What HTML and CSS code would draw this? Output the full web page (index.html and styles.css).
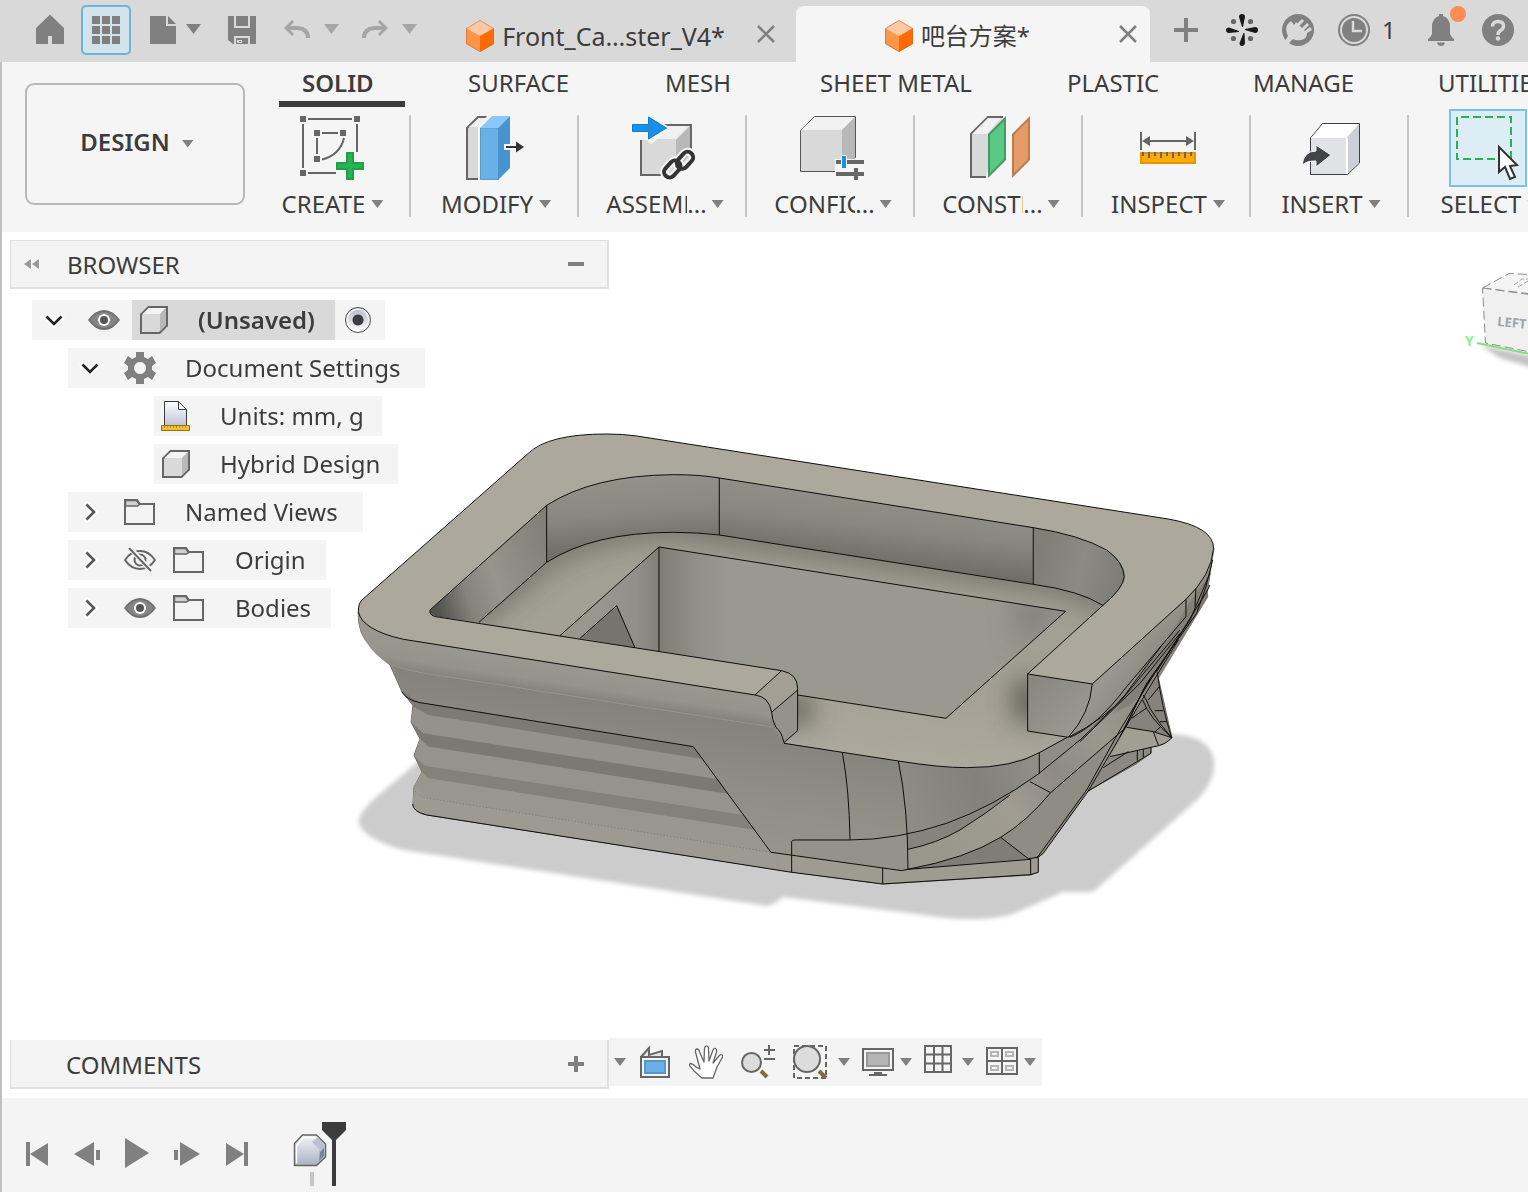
FILE: index.html
```html
<!DOCTYPE html>
<html lang="en">
<head>
<meta charset="utf-8">
<title>吧台方案*</title>
<link rel="stylesheet" href="styles.css">
</head>
<body>
<header class="topbar">
  <div class="quick">
    <button class="tool" aria-label="Home"><svg width="28" height="32" viewBox="36 14 28 32"><path fill="#808080" d="M50 14.500l14 13.500v16H52v-8h-4v8H36V28z"/></svg></button>
    <button class="tool tool-on" aria-label="Data panel"><svg width="28" height="28" viewBox="0 0 28 28"><path fill="#808080" d="M0 0h8v8H0zM10 0h8v8h-8zM20 0h8v8h-8zM0 10h8v8H0zM10 10h8v8h-8zM20 10h8v8h-8zM0 20h8v8H0zM10 20h8v8h-8zM20 20h8v8h-8z"/></svg></button>
    <button class="tool tool-file" aria-label="File"><svg width="26" height="28" viewBox="0 0 26 28"><path fill="#808080" d="M0 0h16v10h10v18H0zM18 0l8 8h-8z"/></svg><i class="caret caret-lg"></i></button>
    <button class="tool tool-save" aria-label="Save"><svg width="28" height="28" viewBox="0 0 28 28"><path fill="#808080" d="M0 0h28v28H5l-5-4z"/><path fill="none" stroke="#d9d9d9" stroke-width="2" d="M7 0v11h14V0M7 28v-7h14v7"/><path fill="#d9d9d9" d="M6 22h2v6H6zM9 24h5v3H9z"/><path fill="#808080" d="M11 25h2v1h-2z"/></svg></button>
    <button class="tool tool-menu" aria-label="Undo"><svg width="26" height="20" viewBox="0 0 26 20"><path fill="none" stroke="#a6a6a6" stroke-width="4" d="M2 8h12q10 1 10 10"/><path fill="none" stroke="#a6a6a6" stroke-width="3" d="M9 1L2 8l7 7"/></svg><i class="caret caret-lg caret-dim"></i></button>
    <button class="tool tool-menu" aria-label="Redo"><svg width="26" height="20" viewBox="0 0 26 20"><path fill="none" stroke="#a6a6a6" stroke-width="4" d="M24 8H12Q2 9 2 18"/><path fill="none" stroke="#a6a6a6" stroke-width="3" d="M17 1l7 7-7 7"/></svg><i class="caret caret-lg caret-dim"></i></button>
  </div>
  <div class="docs">
    <div class="doc">
      <div class="doc-name"><svg width="28" height="32" viewBox="0 0 28 32"><use href="#cube-orange"/></svg><span>Front_Ca…ster_V4*</span></div>
      <button class="close" aria-label="Close Front_Ca…ster_V4"><svg width="18" height="18" viewBox="0 0 18 18"><path stroke="#808080" stroke-width="2.600" d="M1 1l16 16M17 1L1 17"/></svg></button>
    </div>
    <div class="doc doc-on" lang="zh">
      <div class="doc-name"><svg width="28" height="32" viewBox="0 0 28 32"><use href="#cube-orange"/></svg><span>吧台方案*</span></div>
      <button class="close" aria-label="Close 吧台方案"><svg width="18" height="18" viewBox="0 0 18 18"><path stroke="#808080" stroke-width="2.600" d="M1 1l16 16M17 1L1 17"/></svg></button>
    </div>
  </div>
  <div class="status">
    <button aria-label="New design"><svg width="24" height="24" viewBox="0 0 24 24"><path stroke="#808080" stroke-width="4" d="M12 0v24M0 12h24"/></svg></button>
    <button aria-label="Assistant"><svg width="32" height="32" viewBox="0 0 32 32"><path fill="#1a1a1a" d="M13 3q0-3 3-3t3 3l-2 10h-1zM13.500 29q0 3 2.500 3t3-3l-.5-10h-1zM3 13.500q-3 0-3 2.500t3 3l10-1v-1zM29 13q3 0 3 3t-3 3l-10-3v-1z"/><g fill="#666"><circle cx="7.500" cy="7.500" r="2.600"/><circle cx="24.500" cy="7.500" r="2.600"/><circle cx="7.500" cy="24.500" r="2.600"/><circle cx="24.500" cy="24.500" r="2.600"/></g></svg></button>
    <button aria-label="Extensions"><svg width="32" height="32" viewBox="0 0 32 32"><circle cx="16" cy="16" r="16" fill="#808080"/><path fill="#d9d9d9" d="M5 11l4-4 3 4 2-3 6 6 5-5 2 2-5 5 1 1 5-4 2 3-5 3q0 6-6 7-5 1-8-1l-5 5-3-3 3-5q-3-6-1-11z"/><path stroke="#d9d9d9" stroke-width="3" d="M16 11l5-5"/></svg></button>
    <button class="jobs" aria-label="Job status"><svg width="32" height="32" viewBox="0 0 32 32"><circle cx="16" cy="16" r="15" fill="none" stroke="#808080" stroke-width="2"/><circle cx="16" cy="16" r="12" fill="#808080"/><path fill="none" stroke="#d9d9d9" stroke-width="2.400" d="M15 7v10h9"/></svg><span>1</span></button>
    <button class="bell" aria-label="Notifications"><svg width="26" height="32" viewBox="0 0 26 32"><path fill="#808080" d="M11 0h4v2q6 2 7 9v9q1 3 4 5v2H0v-2q3-2 4-5v-9q1-7 7-9zM9 28.500h8q-1 3.500-4 3.500t-4-3.500z"/></svg><i class="badge"></i></button>
    <button aria-label="Help"><svg width="32" height="32" viewBox="0 0 32 32"><circle cx="16" cy="16" r="16" fill="#808080"/><path fill="none" stroke="#d9d9d9" stroke-width="3.400" d="M10.500 12.500q0-5 5.500-5t5.500 4.500q0 3-3 4.500-2.500 1.500-2.500 4.500"/><circle cx="16" cy="24.500" r="2.200" fill="#d9d9d9"/></svg></button>
  </div>
</header>

<section class="ribbon">
  <button class="workspace">DESIGN <i class="caret"></i></button>
  <div class="ribbon-main">
    <nav class="tabs">
      <a href="#" class="tab-on">SOLID</a><a href="#">SURFACE</a><a href="#">MESH</a><a href="#">SHEET METAL</a><a href="#">PLASTIC</a><a href="#">MANAGE</a><a href="#">UTILITIES</a>
    </nav>
    <div class="groups">
      <button class="group group-first"><svg width="78" height="78" viewBox="292 109 78 78"><path fill="none" stroke="#666" stroke-width="2" d="M308 119h44M303 124v44M357 124v28M308 173h28M322 133h16M317 138v16M344 138q-4 17-22 21.500"/><path fill="#666" d="M300 116h6v6h-6zM354 116h6v6h-6zM300 170h6v6h-6zM314 130h6v6h-6zM340 130h6v6h-6zM314 156h6v6h-6z"/><path fill="#27b351" stroke="#219e48" stroke-width="2" d="M347 153h6v10h10v6h-10v10h-6v-10h-10v-6h10z"/></svg><span class="label">CREATE<i class="caret"></i></span></button>
      <button class="group"><svg width="78" height="78" viewBox="455 109 78 78"><path fill="#d9d9d9" stroke="#666" stroke-width="2" d="M478 179h-11v-51l11-11h12"/><path fill="#f0f0f0" d="M469 127l10-9h10l-9 9z"/><path fill="#f5f5f5" d="M478 128l9-12h4v64h-13z"/><path fill="#68b0e6" stroke="#5a9bcb" stroke-width="1" d="M480.500 128h18v51.500h-18z"/><path fill="#88c8fa" d="M480 128l12-12h18l-12 12z"/><path fill="#4794ce" d="M498 128l12-12v52l-12 12z"/><path fill="#f5f5f5" d="M504 144h12v6h-12z"/><path fill="#333" d="M506 146h10v-4.500l8 5.500-8 5.500V148h-10z"/></svg><span class="label">MODIFY<i class="caret"></i></span></button>
      <button class="group"><svg width="78" height="78" viewBox="623 109 78 78"><path fill="#d9d9d9" stroke="#666" stroke-width="2" d="M641 140l15-15h35v35l-16 15h-34z"/><path fill="#f0f0f0" d="M642 139l14-13h33l-13 13z"/><path fill="#b8b8b8" d="M676 140l14-14v28l-14 16z"/><path fill="#f5f5f5" d="M631 122h16v-8l24 14-20 16-4-4H631z"/><path fill="#1a8fe8" stroke="#0d7dd3" stroke-width="1" d="M632.500 124.500h16v-7.500l18 11-18 11v-7.500h-16z"/><g fill="none" stroke="#f5f5f5" stroke-width="8"><rect x="663" y="163" width="19" height="11" rx="5.500" transform="rotate(-48 673 169)"/><rect x="676" y="155" width="19" height="11" rx="5.500" transform="rotate(-48 685 161)"/></g><g fill="none" stroke="#333" stroke-width="4"><rect x="663" y="163" width="19" height="11" rx="5.500" transform="rotate(-48 673 169)"/><rect x="676" y="155" width="19" height="11" rx="5.500" transform="rotate(-48 685 161)"/></g></svg><span class="label"><span class="clip">ASSEMB</span>...<i class="caret"></i></span></button>
      <button class="group"><svg width="78" height="78" viewBox="791 109 78 78"><path fill="#d9d9d9" stroke="#555" stroke-width="1" d="M800.500 130.500l14-14h41v41l-14 14h-41z"/><path fill="#f2f2f2" d="M801 130l14-13h40l-13 13z"/><path fill="#b8b8b8" d="M842 130l13-13v43h-13z"/><path fill="#f5f5f5" d="M835 159h30v22h-30z"/><path fill="#666" d="M836 160h28v4h-28zM836 172h28v4h-28zM854 168h4v12h-4z"/><path fill="#1a8fe8" stroke="#f5f5f5" d="M841.500 155.500h5v13h-5z"/></svg><span class="label"><span class="clip">CONFIG</span>...<i class="caret"></i></span></button>
      <button class="group"><svg width="78" height="78" viewBox="959 109 78 78"><path fill="#d9d9d9" stroke="#666" stroke-width="2" d="M986 177h-15v-43l17-17h15"/><path fill="#f2f2f2" d="M972 134l16-16h13l-14 16z"/><path fill="#5ac882" stroke="#449a64" stroke-width="2" d="M989 134.500l16-16v41l-16 16z"/><path fill="#e69b66" stroke="#bd7c4f" stroke-width="2" d="M1013 134.500l16-16v41l-16 16z"/></svg><span class="label"><span class="clip">CONSTR</span>...<i class="caret"></i></span></button>
      <button class="group"><svg width="78" height="78" viewBox="1127 109 78 78"><path stroke="#666" stroke-width="2" d="M1141 132v18M1195 132v18M1146 141h44"/><path fill="#666" d="M1142 141l8-5v10zM1194 141l-8-5v10z"/><path fill="#ffaa0c" stroke="#e69500" stroke-width="2" d="M1141 153h54v10h-54z"/><path stroke="#666" stroke-width="2" d="M1143 152v4M1149 152v6M1155 152v4M1161 152v6M1167 152v4M1173 152v6M1179 152v4M1185 152v6M1191 152v4"/></svg><span class="label">INSPECT<i class="caret"></i></span></button>
      <button class="group group-narrow"><svg width="78" height="78" viewBox="1290 109 78 78"><path fill="#e1e2e6" stroke="#3b3f45" d="M1310.500 138l12-14.500h37v39.500l-12 11.500h-37z"/><path fill="#fff" d="M1311 138l12-14h36l-13 14z"/><path fill="#cdcfd8" d="M1347 138l12-14v39l-12 11z"/><path stroke="#fff" stroke-width="2" d="M1347 138v36"/><path fill="#414549" stroke="#f5f5f5" d="M1302 165q2-14 14-14v-6l15 10-15 12v-6q-8-1-14 4z"/></svg><span class="label">INSERT<i class="caret"></i></span></button>
      <button class="group group-last"><svg width="78" height="78" viewBox="1449 109 78 78"><path fill="#ddedf6" stroke="#7ac3e6" stroke-width="2" d="M1450 110h76v76h-76z"/><path fill="none" stroke="#27b351" stroke-width="2" stroke-dasharray="8 4" d="M1457 125v-8h54v42h-54v-38"/><path fill="#fff" stroke="#333" stroke-width="2" d="M1499 147v25l6-5 5 12 5-2-5-11 7-1z"/></svg><span class="label">SELECT<i class="caret"></i></span></button>
    </div>
  </div>
</section>

<main class="canvas">
  <svg class="model" viewBox="2 232 1526 866" role="img" aria-label="Bar counter model">
    <defs>
      <filter id="soft" x="-10%" y="-10%" width="120%" height="120%"><feGaussianBlur stdDeviation="2"/></filter>
      <filter id="haze" filterUnits="userSpaceOnUse" x="350" y="430" width="900" height="450"><feGaussianBlur stdDeviation="13"/></filter>
      <linearGradient id="wallBack" gradientUnits="userSpaceOnUse" x1="870" y1="495" x2="862" y2="562"><stop offset="0" stop-color="#918f87"/><stop offset=".45" stop-color="#89877f"/><stop offset="1" stop-color="#6f6d66"/></linearGradient>
      <linearGradient id="wallCurve" gradientUnits="userSpaceOnUse" x1="650" y1="475" x2="656" y2="545"><stop offset="0" stop-color="#93918a"/><stop offset=".5" stop-color="#8a8881"/><stop offset="1" stop-color="#716f68"/></linearGradient>
      <linearGradient id="wallRight" gradientUnits="userSpaceOnUse" x1="1040" y1="560" x2="1122" y2="580"><stop offset="0" stop-color="#807e77"/><stop offset=".5" stop-color="#8c8a83"/><stop offset="1" stop-color="#7d7c76"/></linearGradient>
      <linearGradient id="wallLeft" gradientUnits="userSpaceOnUse" x1="435" y1="600" x2="556" y2="560"><stop offset="0" stop-color="#54524d"/><stop offset=".25" stop-color="#85837c"/><stop offset=".5" stop-color="#97948c"/><stop offset="1" stop-color="#817f78"/></linearGradient>
      <linearGradient id="floor" gradientUnits="userSpaceOnUse" x1="840" y1="570" x2="820" y2="750"><stop offset="0" stop-color="#a19e92"/><stop offset=".6" stop-color="#a5a195"/><stop offset="1" stop-color="#aca89c"/></linearGradient>
      <linearGradient id="rim" gradientUnits="userSpaceOnUse" x1="580" y1="667" x2="573" y2="713"><stop offset="0" stop-color="#9a978f"/><stop offset=".4" stop-color="#95938c"/><stop offset=".85" stop-color="#77746b"/><stop offset="1" stop-color="#85827a"/></linearGradient>
      <linearGradient id="front" gradientUnits="userSpaceOnUse" x1="760" y1="730" x2="740" y2="860"><stop offset="0" stop-color="#85837b"/><stop offset=".5" stop-color="#908e85"/><stop offset="1" stop-color="#99968c"/></linearGradient>
      <linearGradient id="frontRight" gradientUnits="userSpaceOnUse" x1="300" y1="560" x2="760" y2="400"><stop offset="0" stop-color="#939188"/><stop offset=".65" stop-color="#82817a"/><stop offset="1" stop-color="#8f8d84"/></linearGradient>
      <linearGradient id="pit" gradientUnits="userSpaceOnUse" x1="659" y1="0" x2="730" y2="0"><stop offset="0" stop-color="#7f7d76"/><stop offset=".5" stop-color="#908e86"/><stop offset="1" stop-color="#9b9890"/></linearGradient>
      <linearGradient id="pitLeft" gradientUnits="userSpaceOnUse" x1="600" y1="0" x2="659" y2="0"><stop offset="0" stop-color="#99968e"/><stop offset=".6" stop-color="#929088"/><stop offset="1" stop-color="#807e77"/></linearGradient>
      <linearGradient id="end" x1="0" y1="0" x2="1" y2="1"><stop offset="0" stop-color="#87857f"/><stop offset="1" stop-color="#9f9c92"/></linearGradient>
      <linearGradient id="ribbonFace" gradientUnits="userSpaceOnUse" x1="384" y1="670" x2="1250" y2="-80"><stop offset="0" stop-color="#98958b"/><stop offset=".3" stop-color="#a09c92"/><stop offset=".45" stop-color="#8f8b83"/><stop offset=".6" stop-color="#9b988e"/><stop offset="1" stop-color="#7b7971"/></linearGradient>
      <linearGradient id="armSide" gradientUnits="userSpaceOnUse" x1="1010" y1="60" x2="1100" y2="130"><stop offset="0" stop-color="#9b988f"/><stop offset="1" stop-color="#89877e"/></linearGradient>
      <clipPath id="floorClip"><path d="M479 622L546 562Q600 532 673 532Q700 532 719 535L1033 584Q1080 590 1106 606L1028 674V731L1067 737L1039 753Q1000 768 967 768Q930 767 898 761L784 743L798 731V695L782 671Z"/></clipPath>
      <clipPath id="pitClip"><path d="M659 547L1066 611L946 718L798 695L659 651Z"/></clipPath>
    </defs>
    <!-- ground shadow -->
    <path fill="#ccc" filter="url(#soft)" d="M420 760L373 800Q358 814 359 823Q362 838 403 850L767 906Q775 904 783 897L947 918Q985 922 1013 914Q1040 902 1063 892L1093 892L1197 800Q1216 780 1214 760Q1210 736 1172 734L1000 700Z"/>
    <!-- body silhouette -->
    <path fill="#918e84" stroke="#55534c" stroke-width=".8" d="M358 612Q358 635 370 645Q378 656 390 665L402 692L413 705L411 722L420 739L414 755L422 772L414 787L413 804Q415 813 427 815L792 872L883 884L1031 875L1038 872V858L1043 853L1088 791L1136 764L1151 753V747L1172 738L1157 672L1178 640L1208 588L1214 548L640 440Z"/>
    <!-- floor -->
    <path fill="url(#floor)" d="M479 622L546 562Q600 532 673 532Q700 532 719 535L1033 584Q1080 590 1106 606L1028 674V731L1067 737L1039 753Q1000 768 967 768Q930 767 898 761L784 743L798 731V695L782 671Z"/>
    <g clip-path="url(#floorClip)">
      <g filter="url(#haze)" fill="none" stroke="#55534d" stroke-width="18"><path d="M470 622L546 558Q600 526 673 526L1033 578Q1080 586 1112 606" opacity=".7"/><path d="M1030 680V722" stroke-width="32" opacity=".85"/><path d="M796 695V724" stroke-width="30" opacity=".85"/></g>
    </g>
    <!-- inner walls -->
    <path fill="url(#wallLeft)" d="M430 610L547 505V562L479 622L440 617Q428 615 430 610Z"/>
    <path fill="url(#wallCurve)" d="M547 505Q572 490 598 483Q630 475 673 475Q700 475 719 478V535Q700 532 673 532Q600 532 547 562Z"/>
    <path fill="url(#wallBack)" d="M719 478L1034 527.500V584L719 535Z"/>
    <path fill="url(#wallRight)" d="M1033 527.500Q1080 536 1107 551Q1130 565 1124 580Q1121 590 1103 606Q1080 590 1033 584Z"/>
    <!-- sunken compartment -->
    <path fill="url(#pit)" d="M659 547L1066 611L946 718L798 695L782 671L659 651Z"/>
    <g clip-path="url(#pitClip)"><path filter="url(#haze)" fill="#7c7c75" opacity=".7" d="M1010 595L1075 600L1020 650Z"/></g>
    <path fill="url(#pitLeft)" d="M659 547V651L560 636Z"/>
    <path fill="#76746d" d="M617 606L635 648L580 638Z"/>
    <!-- counter top -->
    <path fill="#aca89c" d="M358 612Q358 604 362 600L528 454Q550 434 606 434Q622 434 637 436L1168 519Q1214 527 1214 550Q1212 575 1186 599L1092 684L1028 674L1103 606Q1124 588 1125 577Q1124 560 1107 551Q1080 535 1033 527.500L719 478Q700 475 673 475Q595 475 547 505L430 610Q428 616 440 617L782 671L755 695L403 639Q362 630 358 612Z"/>
    <!-- front rim and band -->
    <path fill="url(#rim)" d="M358 612Q362 630 403 639L755 695Q770 698 773 714Q774 722 778 729L423 673Q402 669 390 665Q358 645 358 612Z"/>
    <path fill="url(#front)" d="M392 665Q402 669 423 673L774 728L784 743L1039 785L902 871L771 852L693 747L420 703Q406 698 402 690Z"/>
    <path fill="none" stroke="#9c9487" stroke-width="1" d="M392 665Q402 669 423 673L773 727"/>
    <path fill="#a39f95" d="M755 695L782 671Q797 673 798 690L772 712Q768 697 755 695Z"/>
    <path fill="#94928b" d="M772 712L798 690V731L784 743Q782 733 777 728Q772 722 772 712Z"/>
    <!-- ribbed skirt -->
    <g transform="translate(340 640) scale(.3333)">
      <path fill="#7c7a73" d="M185 152L240 188L1060 320L1085 357L265 225L220 200Z"/>
      <path fill="#94928a" d="M220 200L265 225L1085 357L1135 418L250 280L212 245Z"/>
      <path fill="#7b7a72" d="M212 247L250 280L1135 418L1165 462L265 320L240 297Z"/>
      <path fill="#96938b" d="M240 297L265 320L1165 462L1210 525L255 378L223 345Z"/>
      <path fill="#848179" d="M223 347L255 378L1210 525L1247 570L265 415L245 395Z"/>
      <path fill="#99968d" d="M245 395L265 415L1247 570L1293 637L265 475L222 440Z"/>
      <path fill="#9d9a91" d="M222 440L265 475L1293 637L1355 647V697L260 525Q218 515 218 492Z"/>
      <path fill="none" stroke="#6c6a62" stroke-width="2" stroke-dasharray="3 7" d="M222 445Q230 468 265 475L1293 637"/>
    </g>
    <!-- curved front right -->
    <g transform="translate(780 640) scale(.3333)">
      <path fill="url(#frontRight)" d="M355 363Q480 383 560 383Q700 383 778 338L862 292L900 290L775 402Q640 500 500 550Q440 572 378 585Q376 470 355 363Z"/>
      <path fill="#94928a" d="M35 605L210 600Q300 596 380 585L384 688L365 692L35 645Z"/>
      <path fill="#85837b" d="M380 585Q550 550 690 465Q600 540 540 570Q470 610 384 628Z"/>
      <path fill="url(#ribbonFace)" d="M384 628Q470 610 540 570Q620 520 690 465L900 300L1195 0L1283 -160L1285 -130L1110 160L1035 265L812 458Q720 560 662 592Q560 655 384 688Z"/>
      <path fill="#8f8c83" d="M662 592Q720 560 812 458L1035 265L1100 165L925 453L790 640Q775 655 745 656Z"/>
      <path fill="#7f7d76" d="M384 688Q560 655 662 592L745 656Z"/>
      <path fill="#9e9b91" d="M0 640L308 683V732L0 692ZM308 683L365 692L752 658L775 653V697L752 704L308 732Z"/>
      <path fill="#85837b" d="M1100 165L1132 97Q1145 200 1175 293L1040 262Z"/>
      <path fill="#a19e94" d="M1040 262L1120 275L1175 293Q1160 315 1113 322L990 350Z"/>
      <path fill="#8b8981" d="M990 350L1113 322V340L925 453L970 383Z"/>
      <path fill="url(#armSide)" d="M937 132L1218 -122L1275 -190Q1300 -240 1301 -270L1283 -155L1195 0Q1030 200 865 292Q920 230 937 132Z"/>
      <path fill="url(#end)" d="M743 101L937 132Q930 220 865 292L743 273Z"/>
      <path fill="#7c7a72" d="M1290 -200L1283 -155L1140 85L1060 190L1000 220L1160 0L1220 -100Z" opacity=".7"/>
    </g>
    <!-- edges -->
    <g class="edges" transform="translate(340 420) scale(.3333)">
      <path d="M55 575Q55 550 66 540L565 100Q625 42 800 42Q850 42 890 48L2485 297Q2621 321 2621 385Q2615 465 2538 538L2257 792L2063 762L2290 555Q2350 505 2353 470Q2350 425 2300 390Q2220 345 2080 323L1138 174Q1080 164 1000 164Q760 166 620 256L270 570Q266 590 300 592L1325 752L1245 825L190 658Q66 630 55 575Z"/>
      <path d="M620 256V427M1138 174V345M2080 323V493M417 607L620 427Q760 337 1000 337Q1070 337 1138 345L2080 493Q2220 512 2290 557"/>
      <path d="M957 694V381L2177 574L1818 895L1373 825M957 381L660 647M720 655L830 557L885 683"/>
      <path d="M1325 752Q1373 762 1373 805V932L1332 968Q1325 935 1308 922Q1296 900 1295 876Q1287 830 1245 825M1296 876L1373 810M185 815Q200 840 240 848L1060 980L1293 1297L1685 1352L1704 1348"/>
      <path d="M218 1152Q218 1175 260 1185L1355 1357L1628 1392L2072 1364L2095 1357V1313"/>
    </g>
    <g class="edges" transform="translate(780 640) scale(.3333)">
      <path d="M12 310L355 363Q480 383 560 383Q700 383 778 338L862 292M187 337Q208 450 210 600M355 363Q384 500 384 688M35 697V605Q36 600 45 600H210Q350 600 500 550Q640 500 775 402L900 300L1020 185L1200 -30M384 628Q470 610 540 570Q620 520 690 465M384 688Q560 655 662 592Q740 545 812 458L1035 265M750 425L812 458M662 592L745 656M384 688L752 658V704M745 656Q775 655 790 640L925 453L1035 265L1110 140L1195 0M770 655L920 450L1020 270L1130 90M778 338V402M308 683V732"/>
      <path d="M937 132Q930 220 865 292L743 273V101M865 292Q980 235 1035 165L1150 10M870 292Q950 260 1040 140L1218 -70V-122M900 305L1080 130L1200 -20M1035 265L1090 150L1230 -60L1290 -200M1020 290L1100 130L1250 -80L1278 -160L1298 -240M1290 -165L1283 -150L1190 0L1130 95M1245 -100L1248 -155"/>
      <path d="M1040 262L1120 275L1175 293Q1160 315 1113 322L990 350M1090 165Q1100 180 1110 205Q1140 255 1175 293Q1110 235 1088 180M1132 97Q1145 200 1175 293M1120 275L1135 315M970 383L1045 335M925 453L1113 340V322M1072 332V362M1090 328V352M1055 235L1098 205M1105 180L1138 140M1125 212H1150M1140 245H1160M1125 275L1140 262"/>
    </g>
    <!-- view cube -->
    <g>
      <path fill="#888" filter="url(#soft)" opacity=".5" d="M1480 345L1540 358V370L1500 358Z"/>
      <path fill="#f4f4f4" stroke="#8c8c8c" stroke-dasharray="9 4" d="M1482.500 288L1509 273.500L1540 275V295Z"/>
      <path fill="#f0f0f0" stroke="#8c8c8c" stroke-dasharray="9 4" d="M1482.500 288L1540 296V354L1485.500 343Z"/>
      <path fill="none" stroke="#a6a6a6" stroke-dasharray="5 2" d="M1514 285L1522 279H1530M1518 287L1528 281"/>
      <path stroke="#7fe07f" stroke-width="2" d="M1477 343L1530 354"/>
      <text class="cube-text" transform="rotate(5 1497 326)" x="1497" y="326">LEFT</text>
      <text class="axis-text" x="1465" y="346">Y</text>
    </g>
  </svg>

  <section class="browser">
    <header class="panel">
      <button aria-label="Collapse browser"><svg width="18" height="12" viewBox="0 0 18 12"><path fill="#999" d="M8 1v10L1 6zM16 1v10L9 6z"/></svg></button>
      <h2>BROWSER</h2>
      <button aria-label="Minimize browser"><svg width="16" height="16" viewBox="0 0 16 16"><path fill="#808080" d="M0 6h16v4H0z"/></svg></button>
    </header>
    <ul class="tree">
      <li class="row root"><button class="chev" aria-label="Collapse"><svg width="24" height="24"><use href="#down"/></svg></button><button class="eye" aria-label="Hide"><svg width="32" height="20"><use href="#eye"/></svg></button><span class="selected"><svg width="28" height="28"><use href="#cube-gray"/></svg><b>(Unsaved)</b></span><input type="radio" class="activate" aria-label="Activate (Unsaved)" checked></li>
      <li class="row"><button class="chev" aria-label="Collapse"><svg width="24" height="24"><use href="#down"/></svg></button><span class="icon"><svg width="32" height="32" viewBox="-16 -16 32 32"><path fill="#808080" fill-rule="evenodd" d="M-4-16h8v5l4 2 4-3 4 7-4 3v4l4 3-4 7-4-3-4 2v5h-8v-5l-4-2-4 3-4-7 4-3v-4l-4-3 4-7 4 3 4-2zM0-6a6 6 0 1 0 .1 0z"/></svg></span>Document Settings</li>
      <li class="row leaf"><span class="icon"><svg width="32" height="32" viewBox="0 0 32 32"><defs><linearGradient id="paper" x1="0" y1="0" x2="0" y2="1"><stop offset="0" stop-color="#fff"/><stop offset="1" stop-color="#b9c0d2"/></linearGradient></defs><path fill="url(#paper)" stroke="#3c3c3c" d="M4.500 1.500h14l8 8v18h-22z"/><path fill="#fff" stroke="#3c3c3c" d="M18.500 1.500v8h8z"/><path fill="#f1c232" stroke="#9c6a10" d="M1.500 25.500h28v5h-28z"/><path stroke="#9c6a10" stroke-dasharray="1 2" d="M4 27h24"/></svg></span>Units: mm, g</li>
      <li class="row leaf"><span class="icon"><svg width="28" height="28"><use href="#cube-gray"/></svg></span>Hybrid Design</li>
      <li class="row"><button class="chev" aria-label="Expand"><svg width="24" height="24"><use href="#right"/></svg></button><span class="icon"><svg width="32" height="26"><use href="#folder"/></svg></span>Named Views</li>
      <li class="row nested"><button class="chev" aria-label="Expand"><svg width="24" height="24"><use href="#right"/></svg></button><button class="eye" aria-label="Show"><svg width="32" height="24" viewBox="0 0 32 24"><path fill="none" stroke="#666" stroke-width="2" d="M1 12Q7 3 16 3t15 9q-6 9-15 9T1 12z"/><circle cx="16" cy="12" r="5.500" fill="none" stroke="#666" stroke-width="2"/><path stroke="#f4f4f4" stroke-width="5" d="M6 0l22 24"/><path stroke="#666" stroke-width="2" d="M5 0l22 23"/></svg></button><span class="icon"><svg width="32" height="26"><use href="#folder"/></svg></span>Origin</li>
      <li class="row nested"><button class="chev" aria-label="Expand"><svg width="24" height="24"><use href="#right"/></svg></button><button class="eye" aria-label="Hide"><svg width="32" height="20"><use href="#eye"/></svg></button><span class="icon"><svg width="32" height="26"><use href="#folder"/></svg></span>Bodies</li>
    </ul>
  </section>

  <div class="dock">
    <section class="panel comments">
      <h2>COMMENTS</h2>
      <button aria-label="Add comment"><svg width="16" height="16" viewBox="0 0 16 16"><path stroke="#808080" stroke-width="4" d="M8 0v16M0 8h16"/></svg></button>
    </section>
    <div class="navbar">
      <button aria-label="Orbit options"><i class="caret"></i></button>
      <button aria-label="Look at"><svg width="32" height="34" viewBox="0 0 32 34"><path fill="#e6e6e6" stroke="#666" stroke-width="2" d="M2 12L10 3v7l13-4v6"/><path fill="#f4f4f4" stroke="#666" stroke-width="2" d="M2 12h28v20H2z"/><path fill="#68b0e6" stroke="#5598ca" stroke-width="2" d="M6 16h20v12H6z"/></svg></button>
      <button aria-label="Pan"><svg width="34" height="34" viewBox="0 0 34 34"><path fill="#fff" stroke="#666" stroke-width="1.300" stroke-linejoin="round" d="M13 33L5 26Q3 23 .8 21q-1-2 1-2.500Q4 19 7 22l4 2-1-4L6.500 7Q6 4 8 4t2.500 3L15 17 15.500 3Q16 .8 17.500 .8T19.500 3l.5 13L24 5q1-2 2.500-1.500T27.500 7L24 18l6-7q1.500-2 3-1t0 3L28 22l-4 11z"/></svg></button>
      <button aria-label="Zoom"><svg width="34" height="34" viewBox="0 0 34 34"><path stroke="#8a6a3d" stroke-width="4" d="M20 26l6 6"/><circle cx="10.500" cy="17.500" r="9.500" fill="#dcdcdc" stroke="#666" stroke-width="2"/><path stroke="#666" stroke-width="2" d="M28 0v10M23 5h11M23 14h11"/></svg></button>
      <button aria-label="Fit"><svg width="36" height="34" viewBox="0 0 36 34"><path fill="none" stroke="#666" stroke-width="2" stroke-dasharray="5 3" d="M1 1h32v32H1z"/><path stroke="#8a6a3d" stroke-width="4" d="M26 26l7 7"/><circle cx="14" cy="14" r="13" fill="#dcdcdc" stroke="#666" stroke-width="2"/></svg><i class="caret"></i></button>
      <button class="menu" aria-label="Display settings"><svg width="32" height="30" viewBox="0 0 32 30"><path fill="#f4f4f4" stroke="#666" stroke-width="2" d="M1 2h30v21H1z"/><path fill="#b5b5b5" stroke="#999" stroke-width="2" d="M5 6h22v13H5z"/><path fill="#666" d="M12 25h8v2h5v2H7v-2h5z"/></svg><i class="caret"></i></button>
      <button class="menu" aria-label="Grid and snaps"><svg width="32" height="34" viewBox="2 1 32 34"><path fill="#f4f4f4" stroke="#666" stroke-width="2" d="M3 2h26v26H3zM12 2v26M20.500 2v26M3 10.500h26M3 19.500h26"/></svg><i class="caret"></i></button>
      <button class="menu" aria-label="Viewports"><svg width="32" height="30" viewBox="0 2 32 30"><path fill="#f4f4f4" stroke="#666" stroke-width="2" d="M1 3h30v26H1zM16 3v26M1 16h30"/><path fill="none" stroke="#b5b5b5" stroke-width="2" d="M5 7h7v4H5zM20 7h7v4h-7zM5 21h7v4H5zM20 21h7v4h-7z"/></svg><i class="caret"></i></button>
    </div>
  </div>
</main>

<footer class="timeline">
  <button aria-label="Go to start"><svg width="24" height="32" viewBox="25 0 24 32"><path fill="#808080" d="M26 4h4v24h-4zM48 5v23L30 16z"/></svg></button>
  <button aria-label="Step back"><svg width="28" height="32" viewBox="0 0 28 32"><path fill="#808080" d="M21 4v24L1 16zM23 12h4v10h-4z"/></svg></button>
  <button aria-label="Play"><svg width="24" height="32" viewBox="1 0 24 32"><path fill="#808080" d="M1 0l24 15L1 30z"/></svg></button>
  <button aria-label="Step forward"><svg width="28" height="32" viewBox="0 0 28 32"><path fill="#808080" d="M7 4v24l20-12zM1 12h4v10H1z"/></svg></button>
  <button aria-label="Go to end"><svg width="24" height="32" viewBox="0 0 24 32"><path fill="#808080" d="M19 4h4v24h-4zM1 5v23l18-12z"/></svg></button>
  <svg class="history" width="56" height="64" viewBox="292 1122 56 64" role="img" aria-label="Timeline marker"><defs><linearGradient id="solid" x1="0" y1="0" x2="0" y2="1"><stop offset="0" stop-color="#f4f5f7"/><stop offset="1" stop-color="#a9b1c2"/></linearGradient></defs><path fill="url(#solid)" stroke="#666" stroke-width="1.500" d="M294.500 1165.500v-22l8-8.500h14l9 9v13l-9 8.500z"/><path fill="#b9c0d0" d="M312 1142l6-5 6 7v12l-5 5v-12z"/><path fill="#7a8499" d="M320 1152l4-4v8l-5 5z"/><path fill="none" stroke="#fff" stroke-width="1.500" d="M296.500 1163.500v-18l7-8h12"/><path fill="#c6c6c6" d="M310 1172h4v14h-4z"/><path fill="#3c3c3c" d="M322 1122h24v8l-10 10v46h-4v-46l-10-10z"/></svg>
</footer>

<svg class="symbols" width="0" height="0" aria-hidden="true">
  <symbol id="cube-orange" viewBox="0 0 28 32"><path fill="#ffc9a3" d="M14 0l14 8-14 8L0 8z"/><path fill="#ff9547" d="M0 8l14 8v16L0 24z"/><path fill="#ff6b00" d="M28 8l-14 8v16l14-8z"/><path fill="none" stroke="#c96a26" stroke-opacity=".6" d="M14 .5l13.500 8v15L14 31.500.5 23.500v-15z"/></symbol>
  <symbol id="cube-gray" viewBox="0 0 28 28"><path fill="#d9d9d9" stroke="#666" stroke-width="2" d="M1 8.500L8.500 1H27v18.500L19.500 27H1z"/><path fill="#f4f4f4" d="M2.500 8L9 2h16l-5 6z"/><path fill="#b8b8b8" d="M20 8l6-6v17l-6 6z"/></symbol>
  <symbol id="eye" viewBox="0 0 32 20"><path fill="#6e6e6e" d="M0 10Q7 0 16 0t16 10q-7 10-16 10T0 10z"/><path fill="#858585" d="M2 10Q8 2 16 2t14 8q-6 8-14 8T2 10z"/><circle cx="16" cy="10" r="6" fill="#fff"/><circle cx="16" cy="10" r="4" fill="#555"/></symbol>
  <symbol id="folder" viewBox="0 0 32 26"><path fill="none" stroke="#666" stroke-width="2" d="M1 25V1h12l3 4h14v20z"/><path fill="#d0d0d0" stroke="#666" stroke-width="1.500" d="M1.500 1.500h11l3 4-2 1.500h-12z"/></symbol>
  <symbol id="down" viewBox="0 0 24 24"><path fill="none" stroke="#fff" stroke-width="7" stroke-linecap="round" d="M5 9l7 7 7-7"/><path fill="none" stroke="#222" stroke-width="2.500" d="M4.500 8.500L12 16l7.500-7.500"/></symbol>
  <symbol id="right" viewBox="0 0 24 24"><path fill="none" stroke="#fff" stroke-width="7" stroke-linecap="round" d="M9 5l7 7-7 7"/><path fill="none" stroke="#555" stroke-width="2.500" d="M8.500 4.500L16 12l-7.500 7.500"/></symbol>
</svg>
</body>
</html>
```
FILE: styles.css
```css
* { box-sizing: border-box; }
body {
  margin: 0;
  min-height: 100vh;
  display: flex;
  flex-direction: column;
  overflow-x: hidden;
  background: #fff;
  color: #3c3c3c;
  font: 24px/32px "Noto Sans", "Noto Sans CJK SC", sans-serif;
}
button {
  padding: 0;
  border: 0;
  background: none;
  color: inherit;
  font: inherit;
  display: flex;
  align-items: center;
  justify-content: center;
  flex: none;
}
svg { display: block; flex: none; }
h2 { margin: 0; font-size: 24px; font-weight: 400; }
.symbols { position: absolute; }
.caret {
  flex: none;
  width: 12px;
  height: 8px;
  background: #808080;
  clip-path: polygon(0 0, 100% 0, 50% 100%);
}
.caret-lg { width: 15px; height: 10px; margin-bottom: 2px; }
.caret-dim { background: #a6a6a6; }

/* top bar */
.topbar { display: flex; height: 62px; background: #d9d9d9; overflow: hidden; }
.quick { display: flex; align-items: center; width: 434px; padding-left: 36px; flex: none; height: 60px; }
.tool-on {
  width: 50px;
  height: 50px;
  margin: 0 19px 0 17px;
  border: 2px solid #6bb5db;
  border-radius: 5px;
  background: #d3e3ec;
}
.tool-file { gap: 10px; }
.tool-menu { gap: 14px; }
.tool-menu + .tool-menu { margin-left: 23px; }
.tool-save { margin: 0 28px 0 27px; }
.docs { display: flex; gap: 8px; flex: none; }
.doc { display: flex; align-items: center; width: 354px; height: 56px; margin-top: 6px; padding-right: 13px; border-radius: 8px 8px 0 0; font-size: 25px; }
.doc:lang(zh) { font-size: 24px; }
.doc-on { background: #f5f5f5; }
.doc-name { flex: 1; display: flex; align-items: center; justify-content: center; gap: 8px; padding-top: 4px; }
.status { display: flex; align-items: center; gap: 24px; height: 60px; padding-left: 24px; }
.status button:first-child { margin-right: 4px; }
.jobs { gap: 12px; }
.bell { position: relative; margin: 0 4px 0 8px; }
.badge { position: absolute; top: -8px; right: -12px; width: 16px; height: 16px; border-radius: 50%; background: #ff8c52; }

/* ribbon */
.ribbon { display: flex; height: 170px; background: #f5f5f5; border-left: 2px solid #bfbfbf; overflow: hidden; }
.workspace {
  width: 220px;
  height: 122px;
  margin: 21px 7px 0 23px;
  padding: 0 0 4px 4px;
  gap: 12px;
  border: 2px solid #b8b8b8;
  border-radius: 9px;
  font-weight: 600;
}
.workspace .caret { margin-top: 3px; }
.ribbon-main { flex: none; }
.tabs { display: grid; grid-template-columns: 166px 197px 155px 247px 186px 185px 150px; height: 45px; padding: 5px 0 0 27px; }
.tabs a { padding-left: 23px; color: inherit; text-decoration: none; }
.tabs .tab-on { width: 126px; border-bottom: 6px solid #3c3c3c; font-weight: 600; }
.groups { display: flex; padding-top: 2px; }
.group { flex-direction: column; justify-content: flex-start; width: 168px; height: 110px; gap: 1px; padding-right: 2px; }
.group-first { width: 159px; }
.group-narrow { width: 158px; }
.group-last { width: 160px; }
.group:not(.group-last) { background: linear-gradient(#c6c6c6, #c6c6c6) right 6px / 2px 102px no-repeat; }
.label { display: flex; align-items: center; gap: 6px; padding-left: 4px; white-space: nowrap; }
.label:has(.clip) { gap: 0; padding-left: 6px; }
.clip { width: 81px; overflow: hidden; }
.clip ~ .caret { margin-left: 5px; }

/* canvas */
.canvas { position: relative; flex: 1; display: flex; flex-direction: column; justify-content: space-between; gap: 24px; padding: 8px 8px 9px; border-left: 2px solid #bfbfbf; }
.model { position: absolute; inset: 0; width: 100%; height: 100%; }
.edges { fill: none; stroke: #0d0d0b; stroke-width: 3; stroke-linejoin: round; }
.cube-text { font-size: 13px; font-weight: 700; fill: #a2a5aa; }
.axis-text { font-size: 14px; font-weight: 700; fill: #8cf08c; }
.browser, .dock { position: relative; }
.panel { display: flex; align-items: center; width: 599px; height: 49px; padding: 0 23px 0 12px; background: #f4f4f4; border: 1px solid #e0e0e0; border-width: 1px 2px 2px 1px; }
.panel h2 { flex: 1; padding: 2px 0 0 26px; }
.tree { list-style: none; margin: 11px 0 0 22px; padding: 0; display: flex; flex-direction: column; align-items: flex-start; gap: 8px; }
.row { display: flex; align-items: center; height: 40px; margin-left: 36px; padding-right: 25px; background: #f4f4f4; white-space: nowrap; }
.root { margin-left: 0; padding-right: 14px; }
.leaf { margin-left: 122px; padding-right: 18px; }
.nested { padding-right: 20px; }
.chev { width: 44px; height: 40px; }
.eye { width: 56px; }
.icon { display: flex; justify-content: center; width: 56px; margin-right: 17px; }
.eye + .icon { width: 42px; margin-right: 25px; }
.leaf .icon { width: 44px; margin-right: 22px; }
.selected { display: flex; align-items: center; gap: 30px; height: 40px; padding: 0 20px 0 8px; background: #d9d9d9; }
.selected b { font-weight: 600; }
.activate {
  appearance: none;
  width: 26px;
  height: 26px;
  margin: 0 0 0 10px;
  border: 1px solid #4a4a4a;
  border-radius: 50%;
  background: radial-gradient(circle, #3c3c3c 0 5px, transparent 6px), linear-gradient(#b3b9c8, #fff);
  box-shadow: inset 0 0 0 2px #ffffffb0;
}
.dock { display: flex; align-items: flex-start; }
.comments { margin-top: 2px; padding-left: 29px; border-top: 0; }
.navbar { display: flex; align-items: center; height: 48px; padding: 0 6px 0 5px; gap: 18px; background: #f4f4f4; }
.navbar button { gap: 9px; }
.navbar .menu { gap: 6px; margin-left: -6px; }
.navbar button:first-child { margin-right: -5px; }

/* timeline */
.timeline { display: flex; align-items: center; gap: 24px; height: 94px; padding: 18px 0 0 23px; background: #f4f4f4; border-left: 2px solid #bfbfbf; }
.history { margin-left: 19px; }
```
